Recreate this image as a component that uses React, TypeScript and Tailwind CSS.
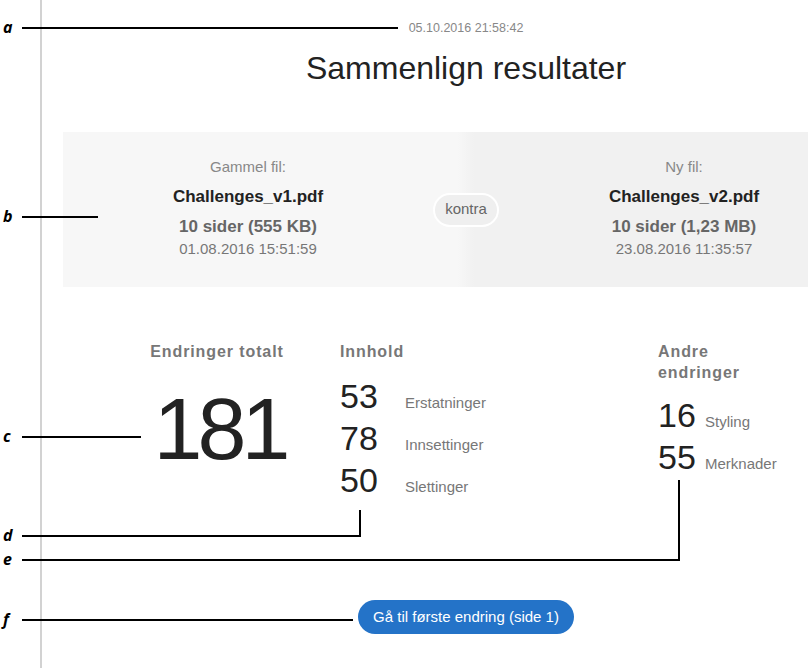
import React from 'react';

// callout lines and letters drawn over the screenshot
const callouts = [
  { label: 'a', y: 28, x2: 398 },
  { label: 'b', y: 217, x2: 98 },
  { label: 'c', y: 437, x2: 141 },
  { label: 'd', y: 536, x2: 361, up: 26 },
  { label: 'e', y: 560, x2: 680, up: 80 },
  { label: 'f', y: 620, x2: 353 },
];

function FileInfo({ caption, name, pages, date }: { caption: string; name: string; pages: string; date: string }) {
  return (
    <div className="flex flex-col items-center pt-[26px] text-center">
      <div className="text-[15px] leading-[18px] text-[#888]">{caption}</div>
      <div className="mt-[11px] text-[17px] leading-[20px] font-bold text-[#222]">{name}</div>
      <div className="mt-[10px] text-[17px] leading-[20px] font-bold text-[#666]">{pages}</div>
      <div className="mt-[3px] text-[15px] leading-[18px] text-[#777]">{date}</div>
    </div>
  );
}

function StatRow({ value, label, numW }: { value: number; label: string; numW: string }) {
  return (
    <div className="flex items-baseline whitespace-nowrap">
      <span className={`${numW} text-[34px] leading-[42px] text-[#222]`}>{value}</span>
      <span className="text-[15px] text-[#777]">{label}</span>
    </div>
  );
}

export default function App() {
  return (
    <div className="relative flex w-[808px] h-[668px] overflow-hidden bg-white font-['Liberation_Sans',Arial,sans-serif]">
      <div className="w-[42px] shrink-0 border-r-2 border-[#d2d2d2]" />

      <div className="w-[848px] shrink-0 flex flex-col items-center">
        <div className="pt-[21px] text-[12.5px] leading-[14px] text-[#888]">05.10.2016 21:58:42</div>
        <h1 className="mt-[17px] text-[32px] leading-none text-[#222]">Sammenlign resultater</h1>

        <div className="mt-[48px] w-[806px] h-[155px] grid grid-cols-[370px_66px_370px] bg-[linear-gradient(90deg,#f7f7f7_49%,#f1f1f1_51%)]">
          <FileInfo caption="Gammel fil:" name="Challenges_v1.pdf" pages="10 sider (555 KB)" date="01.08.2016 15:51:59" />
          <div className="self-center flex items-center justify-center h-[34px] rounded-full border-2 border-white bg-[#efefef] text-[15px] text-[#666]">
            kontra
          </div>
          <FileInfo caption="Ny fil:" name="Challenges_v2.pdf" pages="10 sider (1,23 MB)" date="23.08.2016 11:35:57" />
        </div>

        <div className="mt-[54px] w-full flex pl-[90px]">
          <div className="w-[170px] flex flex-col items-center">
            <div className="text-[16px] leading-[21px] font-bold tracking-[0.9px] text-[#777] whitespace-nowrap">Endringer totalt</div>
            <div className="mt-[23px] pl-[5px] text-[88px] leading-none tracking-[-5px] text-[#222]">181</div>
          </div>

          <div className="ml-[38px] w-[318px]">
            <div className="text-[16px] leading-[21px] font-bold tracking-[0.9px] text-[#777]">Innhold</div>
            <div className="mt-[13px]">
              <StatRow value={53} label="Erstatninger" numW="w-[65px]" />
              <StatRow value={78} label="Innsettinger" numW="w-[65px]" />
              <StatRow value={50} label="Slettinger" numW="w-[65px]" />
            </div>
          </div>

          <div className="w-[130px]">
            <div className="w-[120px] text-[16px] leading-[21px] font-bold tracking-[0.9px] text-[#777]">Andre endringer</div>
            <div className="mt-[11px]">
              <StatRow value={16} label="Styling" numW="w-[47px]" />
              <StatRow value={55} label="Merknader" numW="w-[47px]" />
            </div>
          </div>
        </div>

        <button className="mt-[99px] h-[34px] px-[15px] rounded-full bg-[#2473c8] text-white text-[15px]">
          Gå til første endring (side 1)
        </button>
      </div>

      {callouts.map((c) => (
        <React.Fragment key={c.label}>
          <span
            className="absolute left-[3px] w-[14px] text-[16px] leading-[20px] font-bold italic text-black font-['Open_Sans',sans-serif]"
            style={{ top: c.y - 11 }}
          >
            {c.label}
          </span>
          <div className="absolute left-[22px] h-[2px] bg-black" style={{ top: c.y - 1, width: c.x2 - 22 }} />
          {c.up && (
            <div className="absolute w-[2px] bg-black" style={{ left: c.x2 - 2, top: c.y - c.up, height: c.up + 1 }} />
          )}
        </React.Fragment>
      ))}
    </div>
  );
}
